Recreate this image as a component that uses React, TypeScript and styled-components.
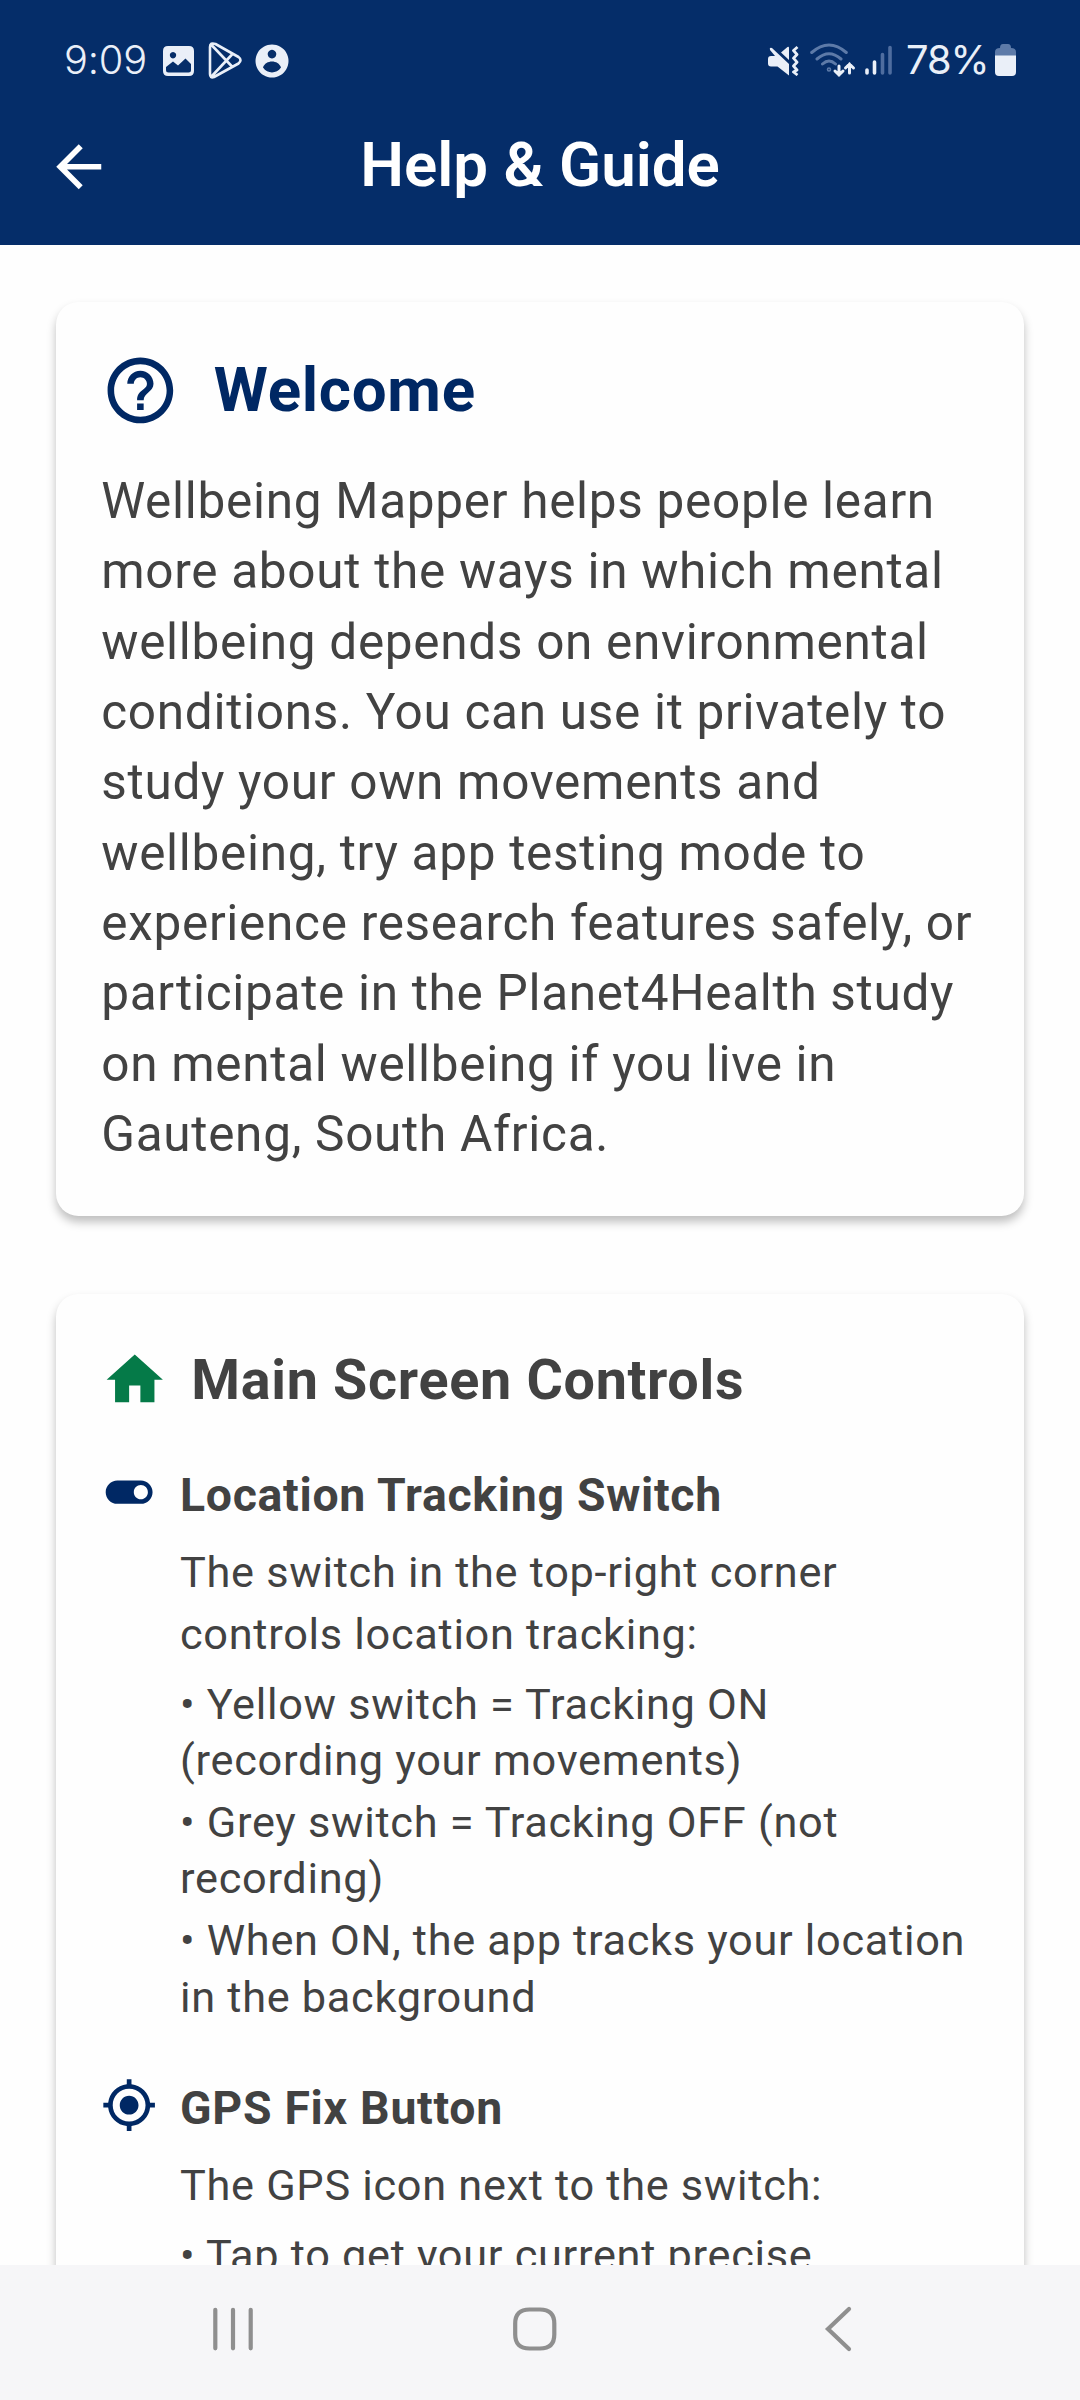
import React from "react";
import styled, { createGlobalStyle } from "styled-components";
import { MdArrowBack, MdHelpOutline, MdHome, MdToggleOn, MdMyLocation } from "react-icons/md";

const GlobalStyle = createGlobalStyle`
  * { box-sizing: border-box; }
  body { margin: 0; background: #fefefe; font-family: Roboto, "Noto Sans", sans-serif; }
  svg { display: block; flex: none; }
  h1, h2, h3, p, ul { margin: 0; padding: 0; }
`;

const Screen = styled.div`
  width: 1080px;
  height: 2400px;
  display: flex;
  flex-direction: column;
  overflow: hidden;
  background: #fefefe;
`;

const Header = styled.header`
  flex: none;
  height: 245.4px;
  background: #052d69;
  color: #fff;
`;

const StatusBar = styled.div`
  height: 90px;
  padding: 0 64px;
  display: flex;
  justify-content: space-between;
  color: #eaeff8;
`;

const StatusGroup = styled.div`
  display: flex;
  height: 120px;
  align-items: center;
`;

const StatusText = styled.span<{ $weight: number; $width: number; $spacing: number; $gap?: number }>`
  margin-left: ${(p) => p.$gap ?? 0}px;
  font-family: Inter, Roboto, sans-serif;
  font-size: 39.8px;
  line-height: 48px;
  letter-spacing: ${(p) => p.$spacing}px;
  font-weight: ${(p) => p.$weight};
  width: ${(p) => p.$width}px;
  white-space: nowrap;
`;

const StatusIcon = styled.svg<{ $gap: number }>`
  margin-left: ${(p) => p.$gap}px;
`;

const TitleBar = styled.div`
  display: grid;
  grid-template-columns: 120px 1fr 120px;
  align-items: center;
  height: 153px;
  padding: 0 45px;
`;

const Title = styled.h1`
  padding-bottom: 3px;
  font-size: 61.875px;
  line-height: 76px;
  font-weight: 600;
  text-align: center;
  white-space: nowrap;
`;

const Content = styled.main`
  flex: 1;
  min-height: 0;
  overflow: hidden;
  padding: 56.25px 56.25px 0;
  display: flex;
  flex-direction: column;
  gap: 78.7px;
`;

const Card = styled.section<{ $height: number }>`
  flex: none;
  height: ${(p) => p.$height}px;
  padding: 45px;
  border-radius: 22.5px;
  background: #fefefe;
  box-shadow: 0 6px 10px rgba(0, 0, 0, 0.25);
`;

const CardHead = styled.div<{ $gap: number; $height: number; $after: number }>`
  display: flex;
  align-items: center;
  gap: ${(p) => p.$gap}px;
  height: ${(p) => p.$height}px;
  margin-bottom: ${(p) => p.$after}px;
`;

const CardTitle = styled.h2<{ $size: number; $color: string; $line: number }>`
  font-size: ${(p) => p.$size}px;
  line-height: ${(p) => p.$line}px;
  font-weight: 700;
  letter-spacing: 0.7px;
  color: ${(p) => p.$color};
  white-space: nowrap;
`;

const Intro = styled.p`
  font-size: 49.5px;
  line-height: 70.33px;
  letter-spacing: 0.7px;
  color: #424242;
`;

const Topic = styled.article`
  display: flex;
  gap: 22.5px;
  margin-bottom: 45.6px;
`;

const TopicBody = styled.div`
  flex: 1;
  min-width: 0;
  color: #424242;
`;

const TopicTitle = styled.h3`
  font-size: 46.4px;
  line-height: 63px;
  font-weight: 700;
  letter-spacing: 0.7px;
`;

const TopicText = styled.p`
  margin-top: 15.5px;
  font-size: 43.3125px;
  line-height: 62.2px;
  letter-spacing: 0.7px;
`;

const Bullets = styled.ul`
  list-style: none;
  padding-top: 10.3px;
`;

const Bullet = styled.li`
  margin-bottom: 5.2px;
  font-size: 43.3125px;
  line-height: 56.5px;
  letter-spacing: 0.7px;
`;

const NavBar = styled.nav`
  flex: none;
  height: 135px;
  padding: 0 216.5px 7px 209px;
  background: #f6f6f8;
  display: flex;
  align-items: center;
  justify-content: space-between;
`;

const navy = "#002864";

function Help({ icon, title, text, items }: { icon: React.ReactNode; title: string; text: string; items: string[] }) {
  return (
    <Topic>
      {icon}
      <TopicBody>
        <TopicTitle>{title}</TopicTitle>
        <TopicText>{text}</TopicText>
        <Bullets>
          {items.map((item) => (
            <Bullet key={item}>{`• ${item}`}</Bullet>
          ))}
        </Bullets>
      </TopicBody>
    </Topic>
  );
}

export default function App() {
  return (
    <Screen>
      <GlobalStyle />
      <Header>
        <StatusBar>
          <StatusGroup>
            <StatusText $weight={300} $width={84} $spacing={-0.2}>9:09</StatusText>
            <StatusIcon $gap={14} width="33" height="36" viewBox="0 0 33 36">
              <path fillRule="evenodd" fill="currentColor" d="M6 4h21q5 0 5 5v20q0 5-5 5H6q-5 0-5-5V9q0-5 5-5zM11 10a3.200 3.200 0 1 0 .01 0zM4 25v3q0 2.500 2.500 2.500h20q2.500 0 2.500-2.500v-6l-5.500-5.500-7.500 7-5-4z" />
            </StatusIcon>
            <StatusIcon $gap={13} width="34" height="38" viewBox="0 0 34 38" fill="none" stroke="currentColor" strokeWidth="2.600" strokeLinejoin="round">
              <path d="M2 6v27q0 4.500 4 3L30.500 22.500q4-3.500 0-6.500L7.500 3Q2 1 2 6zM3.500 4 24.500 26M3.500 35.500 24.500 13" />
            </StatusIcon>
            <StatusIcon $gap={13} width="34" height="36" viewBox="0 0 34 36">
              <path fillRule="evenodd" fill="currentColor" d="M17 2.500a16.500 16.500 0 1 0 .01 0zM17 7.800a4.300 4.300 0 1 1-.01 0zM8 25.500c2.500-8 15.500-8 18 0-4.500 6.500-13.500 6.500-18 0z" />
            </StatusIcon>
          </StatusGroup>
          <StatusGroup>
            <StatusIcon $gap={0} width="32" height="32" viewBox="0 0 32 32" fill="currentColor">
              <path d="M4 12h4L3 6q-1-3 2-2L22 20v11.500L10.500 22.500H4q-3 0-3-3V15q0-3 3-3zM14 8.500l6.500-5.500q1.500-.800 1.500 1v12z" />
              <path fill="none" stroke="currentColor" strokeWidth="2.800" strokeLinejoin="round" d="M30.500 3l-4 3.500 3.500 4-3.500 3.700 3.500 4-3.500 3.800 3.500 4-3.500 2 4 3" />
            </StatusIcon>
            <StatusIcon $gap={11} width="46" height="36" viewBox="0 0 46 36" fill="none" strokeWidth="3" strokeLinecap="round">
              <g stroke="#5d7aa8"><path d="M1.700 10.500q17.300-15 34.600 0M7 17q12-10.500 24 0M12.500 22q6.500-6 13 0" /><circle cx="19" cy="27.500" r=".8" /></g>
              <path stroke="currentColor" d="M29 24v9m-4-4 4 4 4-4M39.500 31v-9m-4 4 4-4 4 4" />
            </StatusIcon>
            <StatusIcon $gap={8} width="30" height="32" viewBox="0 0 30 32" strokeWidth="3.600" strokeLinecap="round">
              <path stroke="currentColor" d="M3 26v3M10.500 18v11" />
              <path stroke="#4f6d9f" d="M18.500 10.500V29M26 3.500V29" />
            </StatusIcon>
            <StatusText $weight={400} $width={88} $spacing={-1} $gap={12}>78%</StatusText>
            <StatusIcon $gap={1} width="21" height="32" viewBox="0 0 21 32">
              <path fill="#5d7aa8" d="M8 0h5q3 0 3 4 5 0 5 4v4H0V8q0-4 5-4 0-4 3-4z" />
              <path fill="currentColor" d="M0 11.500h21V28q0 4-4 4H4q-4 0-4-4z" />
            </StatusIcon>
          </StatusGroup>
        </StatusBar>
        <TitleBar>
          <MdArrowBack size={67.5} />
          <Title>Help &amp; Guide</Title>
        </TitleBar>
      </Header>
      <Content>
        <Card $height={914}>
          <CardHead $gap={33.75} $height={87} $after={32.5}>
            <MdHelpOutline size={78.75} color={navy} />
            <CardTitle $size={61.875} $line={74.25} $color={navy}>Welcome</CardTitle>
          </CardHead>
          <Intro>
            Wellbeing Mapper helps people learn more about the ways in which mental wellbeing depends on
            environmental conditions. You can use it privately to study your own movements and wellbeing, try app
            testing mode to experience research features safely, or participate in the Planet4Health study on mental
            wellbeing if you live in Gauteng, South Africa.
          </Intro>
        </Card>
        <Card $height={1400}>
          <CardHead $gap={22.5} $height={81} $after={43.2}>
            <MdHome size={67.5} color="#057a48" />
            <CardTitle $size={55.7} $line={68} $color="#424242">Main Screen Controls</CardTitle>
          </CardHead>
          <Help
            icon={<MdToggleOn size={56.25} color={navy} />}
            title="Location Tracking Switch"
            text="The switch in the top-right corner controls location tracking:"
            items={[
              "Yellow switch = Tracking ON (recording your movements)",
              "Grey switch = Tracking OFF (not recording)",
              "When ON, the app tracks your location in the background",
            ]}
          />
          <Help
            icon={<MdMyLocation size={56.25} color={navy} />}
            title="GPS Fix Button"
            text="The GPS icon next to the switch:"
            items={["Tap to get your current precise"]}
          />
        </Card>
      </Content>
      <NavBar>
        <svg width="48" height="48" viewBox="0 0 48 48" stroke="#8f8f8f" strokeWidth="4.200" strokeLinecap="round">
          <path d="M6.300 4.800v38.500M24 4.800v38.500M41.700 4.800v38.500" />
        </svg>
        <svg width="48" height="48" viewBox="0 0 48 48" fill="none" stroke="#8f8f8f" strokeWidth="4.200">
          <path d="M17.500 4.500h10.500Q42.300 4.500 42.300 18.500v11q0 14-14.300 14H17.500q-14.300 0-14.300-14v-11q0-14 14.300-14z" />
        </svg>
        <svg width="48" height="48" viewBox="0 0 48 48" fill="none" stroke="#8f8f8f" strokeWidth="4.200" strokeLinecap="round">
          <path d="M33 4 12 24l21 20" />
        </svg>
      </NavBar>
    </Screen>
  );
}
